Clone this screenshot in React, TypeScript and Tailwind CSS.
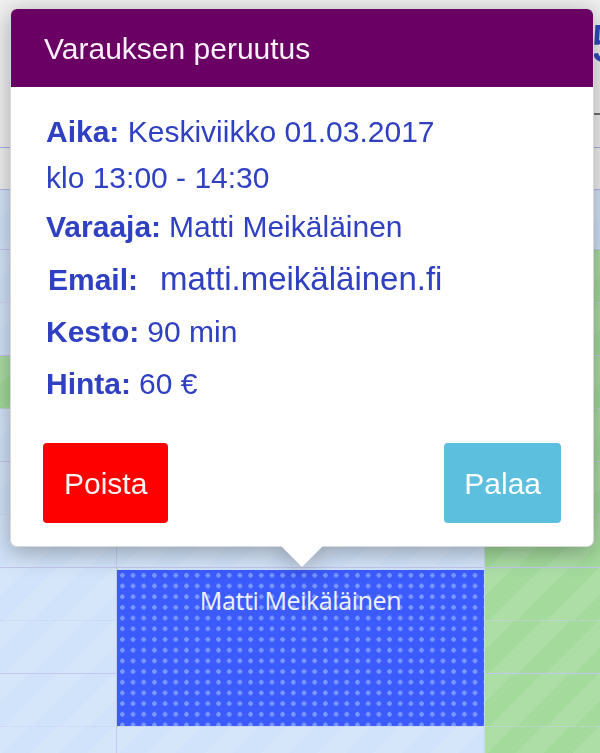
import React from "react";

const BLUE = "bg-[#d1e3fa]";
const GREEN = "bg-[#a4db9d]";
const STRIPES =
  "[background-image:repeating-linear-gradient(135deg,rgba(255,255,255,0.09)_0px,rgba(255,255,255,0.09)_20px,transparent_20px,transparent_40px)]";

// 11 slot rows below the header; the first one is cut by the header
const ROW_H = [60, 53, 53, 53, 53, 53, 53, 53, 53, 53, 53];

function Cell({ row, green }: { row: number; green: boolean }) {
  const line =
    row % 2 === 0
      ? "border-b border-[#c3c7ef]"
      : "border-b border-[#cbcff1] [border-bottom-style:dotted]";
  return (
    <div
      className={`${green ? GREEN : BLUE} ${STRIPES} ${line} shrink-0`}
      style={{ height: ROW_H[row] }}
    />
  );
}

function CalendarBackground() {
  const rows = ROW_H.map((_, i) => i);
  return (
    <div className="flex flex-col">
      {/* day header */}
      <div className="flex h-[190px] flex-col border-b border-[#b3bbe8] bg-[#f1f1f2]">
        <div className="flex h-[113px] items-start">
          <div className="ml-[181px] h-[7px] w-[2px] rotate-[22deg] bg-[#4a4a4a]" />
          <span className="ml-[410px] mt-[16px] font-['Liberation_Sans',Arial,sans-serif] text-[54px] leading-none text-[#2f4bbd]">
            5
          </span>
        </div>
        <div className="ml-[420px] h-[2px] bg-[#707070]" />
        <div className="mt-[32px] h-px bg-[#a9afe9]" />
      </div>

      {/* slot grid */}
      <div className="flex">
        <div className="flex w-[117px] shrink-0 flex-col border-r border-[#c6cbef]">
          {rows.map((r) => (
            <Cell key={r} row={r} green={r === 3} />
          ))}
        </div>
        <div className="flex w-[367px] shrink-0 flex-col">
          {rows.slice(0, 7).map((r) => (
            <Cell key={r} row={r} green={false} />
          ))}
          <div className="h-[159px] shrink-0 border-b border-[#cbcff1] bg-[#d1e3fa] pt-[2px] [border-bottom-style:dotted]">
            <div className="h-full bg-[#3b5bfc] pt-[13px] text-center font-['Open_Sans',sans-serif] text-[25px] leading-[34px] tracking-[-0.4px] text-[#eef0ff] [background-image:radial-gradient(circle,rgba(128,156,255,0.95)_2px,transparent_2.4px)] [background-size:10.7px_10.7px] [background-position:0px_0px]">
              Matti Meikäläinen
            </div>
          </div>
          <Cell row={10} green={false} />
        </div>
        <div className="flex flex-1 flex-col border-l border-[#c4d8f0]">
          {rows.map((r) => (
            <Cell key={r} row={r} green={r !== 0} />
          ))}
        </div>
      </div>
    </div>
  );
}

function InfoRow({ label, children, className = "" }: { label: string; children: React.ReactNode; className?: string }) {
  return (
    <div className={`flex h-[46px] items-baseline pl-[3px] leading-[46px] ${className}`}>
      <span className="font-bold">{label}</span>
      <span className="ml-[8px]">{children}</span>
    </div>
  );
}

function CancelPopover() {
  return (
    <div className="absolute left-[10px] top-[8px] w-[584px] font-['Liberation_Sans',Arial,sans-serif] drop-shadow-[0_5px_12px_rgba(0,0,0,0.32)]">
      <div className="rounded-[7px] border border-[#d8d8d8] bg-white">
        <div className="flex h-[78px] items-center rounded-t-[6px] bg-[#6a0063] px-[33px] text-[30px] text-[#fbf0fb]">
          Varauksen peruutus
        </div>

        <div className="px-[32px] pb-[23px] pt-[22px] text-[30px] text-[#2f40c2]">
          <div className="pl-[3px] leading-[46px]">
            <span className="font-bold">Aika:</span> Keskiviikko 01.03.2017
            <br />
            klo 13:00 - 14:30
          </div>
          <InfoRow label="Varaaja:" className="mt-[3px]">
            Matti Meikäläinen
          </InfoRow>
          <div className="mt-[6px] flex h-[46px] items-baseline pl-[5px] leading-[46px]">
            <span className="w-[112px] shrink-0 font-bold">Email:</span>
            <span className="text-[33px]">matti.meikäläinen.fi</span>
          </div>
          <InfoRow label="Kesto:" className="mt-[7px]">
            90 min
          </InfoRow>
          <InfoRow label="Hinta:" className="mt-[6px]">
            60 €
          </InfoRow>

          <div className="mt-[36px] flex items-center justify-between">
            <button className="h-[80px] rounded-[4px] bg-[#ff0000] px-[21px] text-[30px] text-[#fff4f4]">
              Poista
            </button>
            <button className="h-[80px] rounded-[4px] bg-[#5bbfdd] px-[20px] text-[30px] text-white">
              Palaa
            </button>
          </div>
        </div>
      </div>
      {/* arrow pointing at the booking */}
      <div className="ml-[271px] -mt-px h-0 w-0 border-x-[21px] border-t-[21px] border-x-transparent border-t-white" />
    </div>
  );
}

export default function App() {
  return (
    <div className="relative h-[753px] w-[600px] overflow-hidden bg-[#f1f1f2]">
      <CalendarBackground />
      <CancelPopover />
    </div>
  );
}
